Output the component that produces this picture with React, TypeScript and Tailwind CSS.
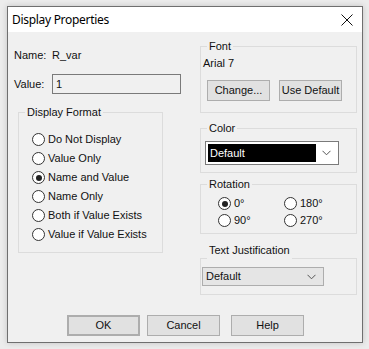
import React from 'react';

const Radio = ({ label, checked = false }: { label: string; checked?: boolean }) => (
  <div className="flex items-center h-[19px]">
    <span className="w-[13px] h-[13px] rounded-full border border-[#333333] bg-white flex items-center justify-center">
      {checked && <span className="w-[6px] h-[6px] rounded-full bg-[#222222]" />}
    </span>
    <span className="ml-[3px]">{label}</span>
  </div>
);

const Button = ({ label, className = '' }: { label: string; className?: string }) => (
  <div
    className={`flex items-center justify-center bg-[#e1e1e1] border border-[#adadad] ${className}`}
  >
    {label}
  </div>
);

const Chevron = () => (
  <svg width="9" height="6" viewBox="0 0 9 6" className="text-[#555555]">
    <path d="M0.5 0.8 L4.5 4.8 L8.5 0.8" fill="none" stroke="currentColor" strokeWidth="1" />
  </svg>
);

const Group = ({
  title,
  className = '',
  legendClass = '',
  children,
}: {
  title: string;
  className?: string;
  legendClass?: string;
  children?: React.ReactNode;
}) => (
  <fieldset className={`border border-[#dcdcdc] ${className}`}>
    <legend className={`ml-[6px] px-[2px] leading-[13px] ${legendClass}`}>{title}</legend>
    {children}
  </fieldset>
);

export default function App() {
  return (
    <div
      className="w-[369px] h-[349px] bg-[#ececec] pt-[6px] pl-[7px] text-[11px] text-[#111111] overflow-hidden"
      style={{ fontFamily: '"Liberation Sans", Arial, sans-serif' }}
    >
      <div className="w-[356px] h-[337px] border border-[#6f6f6f] bg-[#f0f0f0] shadow-[0_0_6px_rgba(0,0,0,0.18)] flex flex-col">
        {/* title bar */}
        <div className="h-[25px] bg-white flex items-center justify-between pl-[4px] pr-[9px]">
          <span
            className="text-[12px] tracking-[-0.3px] text-black"
            style={{ fontFamily: '"Noto Sans", "Open Sans", sans-serif' }}
          >
            Display Properties
          </span>
          <svg width="12" height="12" viewBox="0 0 12 12">
            <path d="M0.5 0.5 L11.5 11.5 M11.5 0.5 L0.5 11.5" stroke="#111" strokeWidth="1" />
          </svg>
        </div>

        <div className="flex items-start">
          {/* left column */}
          <div className="w-[192px] pl-[6px]">
            <div className="mt-[13px] h-[20px] flex items-center">
              <span className="w-[38px]">Name:</span>
              <span>R_var</span>
            </div>
            <div className="mt-[9px] h-[20px] flex items-center">
              <span className="w-[38px]">Value:</span>
              <div className="w-[129px] h-[20px] border border-[#7a7a7a] bg-[#f0f0f0] flex items-center pl-[3px]">
                1
              </div>
            </div>
            <Group title="Display Format" className="ml-[4px] mt-[12px] w-[145px] h-[147px]">
              <div className="pl-[13px] pt-[11px]">
                <Radio label="Do Not Display" />
                <Radio label="Value Only" />
                <Radio label="Name and Value" checked />
                <Radio label="Name Only" />
                <Radio label="Both if Value Exists" />
                <Radio label="Value if Value Exists" />
              </div>
            </Group>
          </div>

          {/* right column */}
          <div className="w-[157px] flex flex-col">
            <Group title="Font" className="mt-[8px] h-[73px]">
              <div className="pl-[2px] mt-[4px] leading-[13px]">Arial 7</div>
              <div className="flex mt-[10px] pl-[6px]">
                <Button label="Change..." className="w-[63px] h-[21px]" />
                <Button label="Use Default" className="w-[63px] h-[21px] ml-[9px]" />
              </div>
            </Group>

            <Group title="Color" className="mt-[9px] h-[51px]">
              <div className="mt-[6px] ml-[4px] w-[134px] h-[24px] border border-[#7a7a7a] bg-white flex items-center pl-[2px] pr-[7px]">
                <div className="flex-1 h-[18px] bg-black text-white flex items-center pl-[2px]">Default</div>
                <span className="ml-[6px] flex items-center">
                  <Chevron />
                </span>
              </div>
            </Group>

            <Group title="Rotation" className="mt-[5px] h-[56px]">
              <div className="grid grid-cols-2 pl-[17px] mt-[4px]">
                <div className="flex items-center h-[17px]">
                  <span className="w-[13px] h-[13px] rounded-full border border-[#333333] bg-white flex items-center justify-center">
                    <span className="w-[6px] h-[6px] rounded-full bg-[#222222]" />
                  </span>
                  <span className="ml-[3px]">0°</span>
                </div>
                <div className="flex items-center h-[17px] -ml-[3px]">
                  <span className="w-[13px] h-[13px] rounded-full border border-[#333333] bg-white" />
                  <span className="ml-[3px]">180°</span>
                </div>
                <div className="flex items-center h-[17px]">
                  <span className="w-[13px] h-[13px] rounded-full border border-[#333333] bg-white" />
                  <span className="ml-[3px]">90°</span>
                </div>
                <div className="flex items-center h-[17px] -ml-[3px]">
                  <span className="w-[13px] h-[13px] rounded-full border border-[#333333] bg-white" />
                  <span className="ml-[3px]">270°</span>
                </div>
              </div>
            </Group>

            <Group
              title="Text Justification"
              className="mt-[18px] h-[43px]"
              legendClass="relative top-[-8px]"
            >
              <div className="mt-[2px] ml-[1px] w-[122px] h-[19px] border border-[#adadad] bg-[#e5e5e5] flex items-center justify-between pl-[3px] pr-[7px]">
                <span>Default</span>
                <Chevron />
              </div>
            </Group>
          </div>
        </div>

        {/* bottom buttons */}
        <div className="flex mt-[20px] pl-[59px]">
          <Button label="OK" className="w-[73px] h-[21px] border-2 border-[#0078d7]" />
          <Button label="Cancel" className="w-[73px] h-[21px] ml-[7px]" />
          <Button label="Help" className="w-[73px] h-[21px] ml-[11px]" />
        </div>
      </div>
    </div>
  );
}
